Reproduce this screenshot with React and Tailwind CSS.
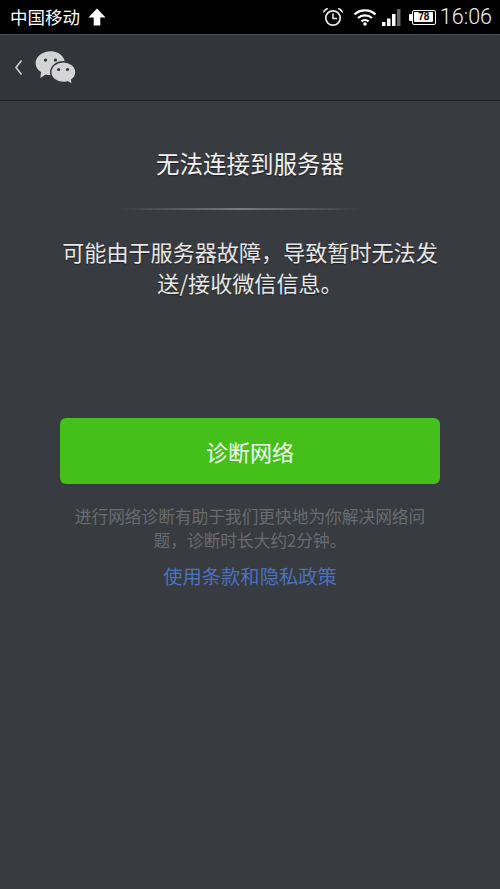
import React from "react";

const cjk = "font-['Noto_Sans_CJK_SC','Noto_Sans',sans-serif]";

function UploadArrow() {
  return (
    <svg viewBox="0 0 18 18" className="h-[18px] w-[18px] text-white" fill="currentColor">
      <path d="M9 0.5 L17.5 9.5 L12.3 9.5 L12.3 17.5 L5.7 17.5 L5.7 9.5 L0.5 9.5 Z" />
    </svg>
  );
}

function AlarmIcon() {
  return (
    <svg viewBox="0 0 22 20" className="h-5 w-[22px] text-[#e8e8e8]" fill="none" stroke="currentColor">
      <circle cx="11" cy="11" r="7.2" strokeWidth="1.8" />
      <path d="M11 6.5 V11.5 H15" strokeWidth="1.6" />
      <path d="M1.5 5.5 A4 4 0 0 1 6 1.5 Z M20.5 5.5 A4 4 0 0 0 16 1.5 Z" fill="currentColor" strokeWidth="0.8" />
    </svg>
  );
}

function WifiIcon() {
  return (
    <svg viewBox="0 0 24 18" className="h-[18px] w-6 text-white" fill="none" stroke="currentColor" strokeWidth="2.3">
      <path d="M1.5 6.5 C7 1 17 1 22.5 6.5" />
      <path d="M5 10 C9 6.4 15 6.4 19 10" />
      <path d="M8.4 13.4 C10.4 11.6 13.6 11.6 15.6 13.4" />
      <circle cx="12" cy="16" r="1.8" fill="currentColor" stroke="none" />
    </svg>
  );
}

function SignalIcon() {
  return (
    <svg viewBox="0 0 20 18" className="h-[18px] w-5" fill="#fff">
      <rect x="0" y="14" width="3.5" height="4" />
      <rect x="5" y="10.5" width="3.5" height="7.5" />
      <rect x="10" y="6" width="3.5" height="12" />
      <rect x="15" y="1" width="3.5" height="17" fill="#666" />
    </svg>
  );
}

function BatteryIcon() {
  return (
    <div className="flex items-center">
      <div className="h-[7px] w-[3px] rounded-l-[1px] bg-white" />
      <div className="flex h-[15px] w-[24px] items-center justify-center rounded-[2px] border-[1.5px] border-white">
        <div className="flex h-[10px] w-[19px] items-center justify-center rounded-[1px] bg-white font-['Liberation_Sans',sans-serif] text-[10px] leading-none font-bold text-black">
          78
        </div>
      </div>
    </div>
  );
}

function WeChatLogo() {
  return (
    <svg viewBox="0 0 42 36" className="h-[38px] w-[44px]">
      <path d="M16 1 C23.5 1 29.5 5.8 29.5 12.5 C29.5 19 23.5 24 16 24 C14.2 24 12.6 23.7 11.2 23.3 L6 26.5 L6.8 21 C3.4 18.9 1.5 15.9 1.5 12.5 C1.5 5.8 8.3 1 16 1 Z" fill="#d4d4d4" />
      <circle cx="11" cy="9.5" r="1.6" fill="#32363a" />
      <circle cx="20.5" cy="9.5" r="1.6" fill="#32363a" />
      <path d="M28 11 C34.5 11 40 15.4 40 21 C40 24 38.4 26.6 36 28.4 L36.6 33 L32 30.3 C30.8 30.7 29.4 30.9 28 30.9 C21.4 30.9 16 26.6 16 21 C16 15.4 21.4 11 28 11 Z" fill="#d4d4d4" stroke="#32363a" strokeWidth="1.4" />
      <circle cx="23.5" cy="18.5" r="1.5" fill="#32363a" />
      <circle cx="32" cy="18.5" r="1.5" fill="#32363a" />
    </svg>
  );
}

function StatusBar() {
  return (
    <div className={`flex h-[34px] items-center justify-between bg-black pr-2 pl-2.5 text-white ${cjk}`}>
      <div className="flex items-center gap-2">
        <span className="text-[17.5px] leading-none">中国移动</span>
        <UploadArrow />
      </div>
      <div className="flex items-center">
        <AlarmIcon />
        <div className="ml-[9px]"><WifiIcon /></div>
        <div className="ml-[5px]"><SignalIcon /></div>
        <div className="ml-[7px]"><BatteryIcon /></div>
        <span className="ml-1 font-['Roboto',sans-serif] text-[21.5px] leading-none font-light text-[#f0f0f0]">16:06</span>
      </div>
    </div>
  );
}

function Header() {
  return (
    <div className="flex h-[67px] items-center border-t border-b border-t-[#4a4d51] border-b-[#1f2124] bg-[#32363a] pl-[13px]">
      <svg viewBox="0 0 10 16" className="h-[17px] w-2.5" fill="none" stroke="#d0d0d0" strokeWidth="1.6">
        <path d="M8.5 1 L3 8 L8.5 15" />
      </svg>
      <div className="ml-[11px] flex pt-0.5"><WeChatLogo /></div>
    </div>
  );
}

export default function App() {
  return (
    <div className={`flex h-[889px] w-[500px] flex-col overflow-hidden bg-[#383b40] ${cjk}`}>
      <StatusBar />
      <Header />
      <div className="flex flex-col items-center px-[60px]">
        <h1 className="mt-[46px] text-[23.5px] leading-[32px] font-normal text-[#f2f2f2] [text-shadow:0_1px_1px_#1c1e20]">无法连接到服务器</h1>
        <div className="mt-[29px] mr-5 h-0.5 w-[244px] bg-gradient-to-r from-transparent via-[#7a7c7f] to-transparent" />
        <p className="mt-[26px] w-[380px] text-center text-[22.1px] leading-[31px] text-[#e8e8e8] [text-shadow:0_1px_1px_#1c1e20]">
          可能由于服务器故障，导致暂时无法发送/接收微信信息。
        </p>
        <button className="mt-[120px] flex h-[66px] w-[380px] items-center justify-center rounded-md bg-[#45c01a] text-[22px] text-[#f4fff0]">
          诊断网络
        </button>
        <p className="mt-5 w-[352px] text-center text-[16.7px] leading-[24px] text-[#696c70]">
          进行网络诊断有助于我们更快地为你解决网络问题，诊断时长大约2分钟。
        </p>
        <a className="mt-2.5 text-[19.3px] leading-[28px] text-[#4a72c0]">使用条款和隐私政策</a>
      </div>
    </div>
  );
}
